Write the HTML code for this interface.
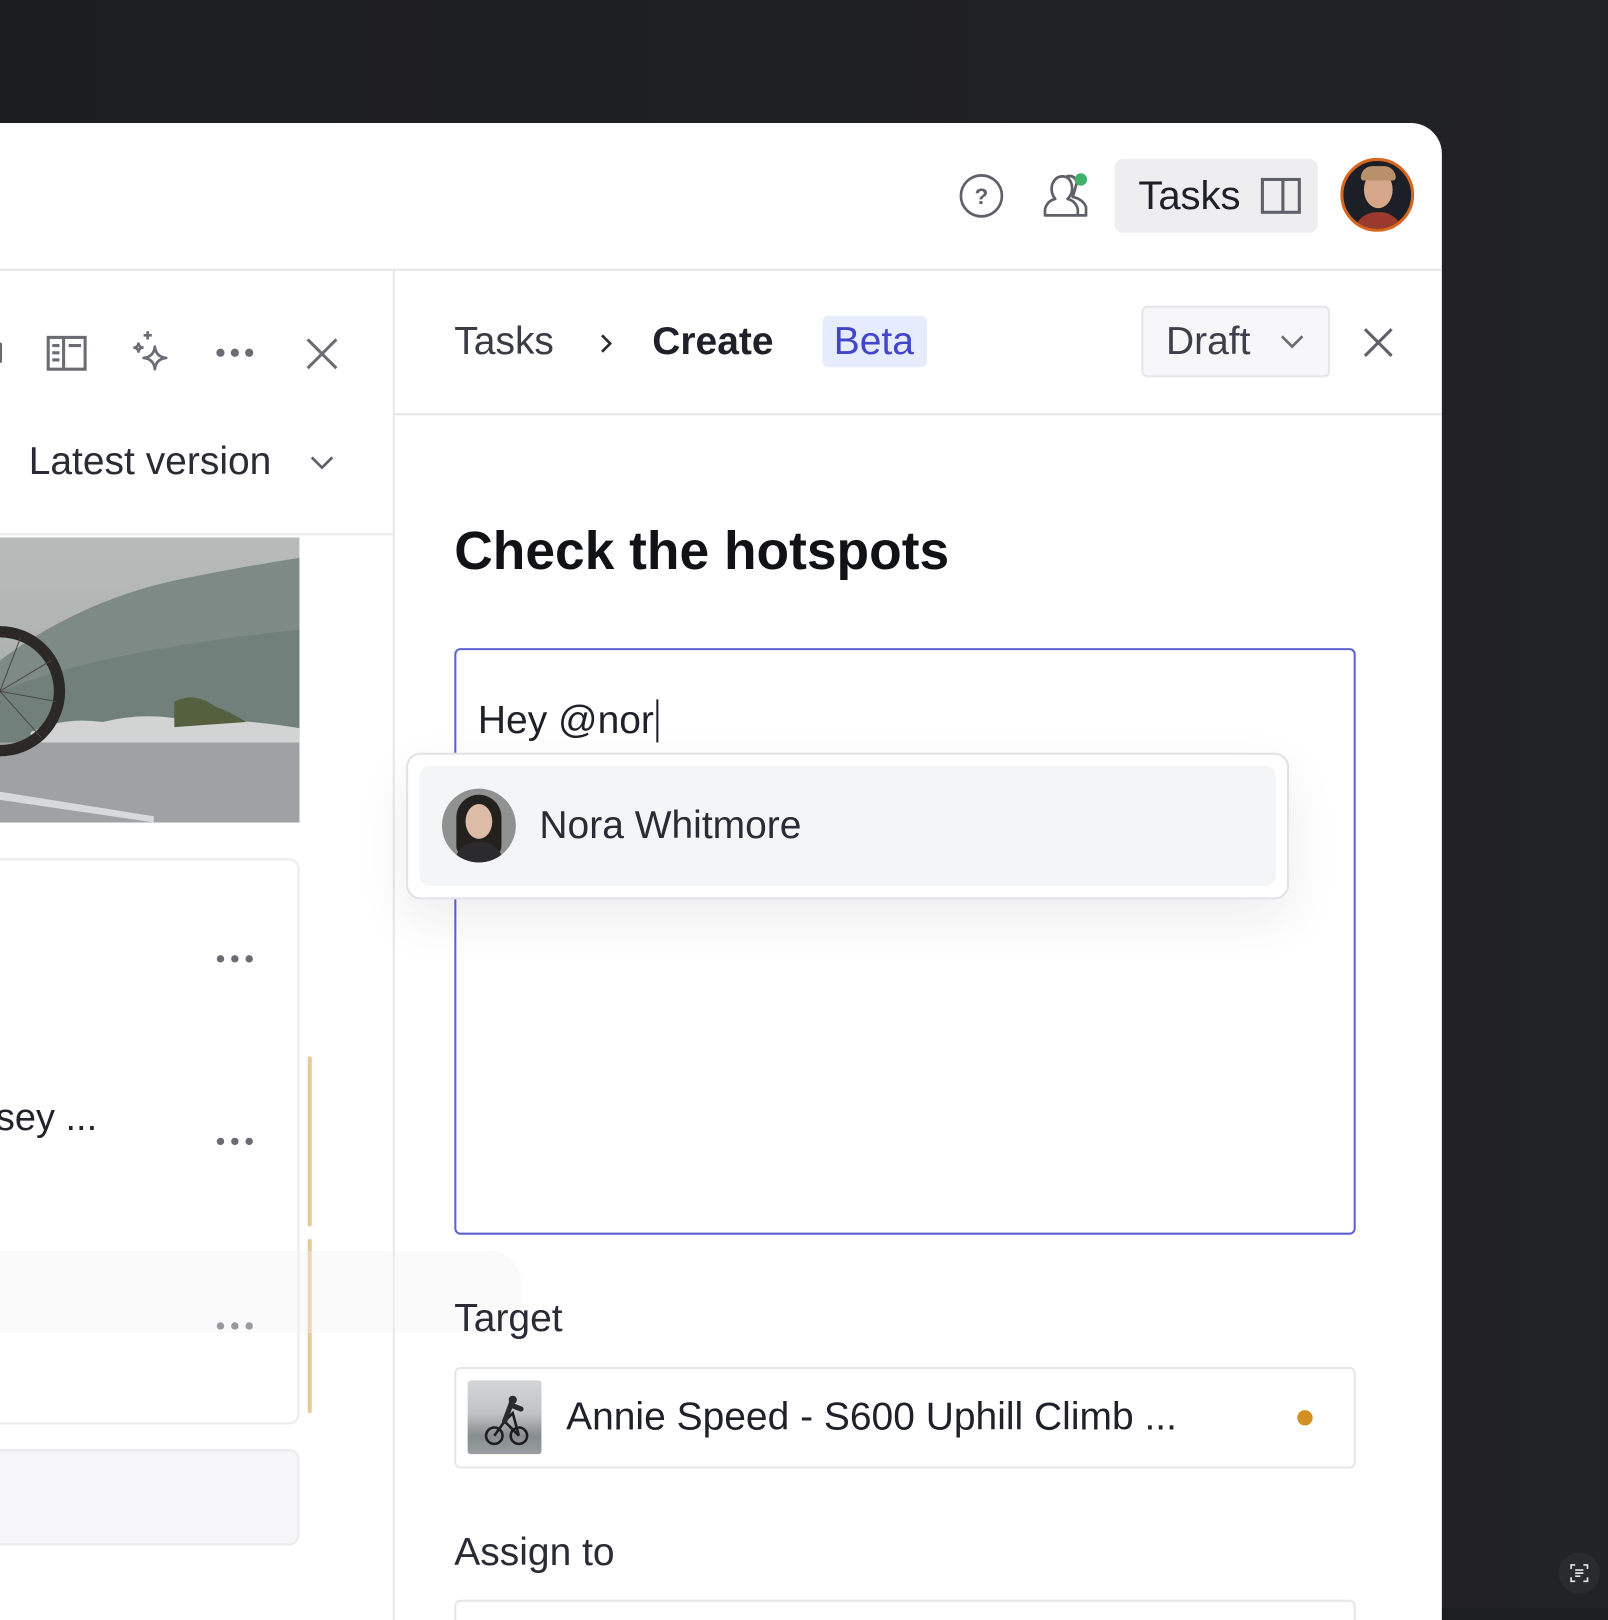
<!DOCTYPE html>
<html><head><meta charset="utf-8">
<style>
*{box-sizing:border-box;margin:0;padding:0}
html,body{width:1608px;height:1608px;overflow:hidden;background:#1d1e22}
body{font-family:"Liberation Sans",sans-serif}
#s{position:absolute;left:0;top:0;width:1568px;height:1568px;transform:scale(1.02551);transform-origin:0 0;background:linear-gradient(90deg,#1c1d21 0%,#222327 100%)}
.win{position:absolute;left:0;top:120px;width:1406px;height:1460px;background:#fff;border-top-right-radius:30px;overflow:hidden}
.abs{position:absolute}
.t{position:absolute;white-space:nowrap;line-height:1}
.ic{position:absolute}
</style></head><body><div id="s">
<div class="win">
  <div class="abs" style="left:0;top:142px;width:1406px;height:2px;background:#e6e6e9"></div>
  <svg class="ic" style="left:934px;top:48px" width="46" height="46" viewBox="0 0 46 46"><circle cx="23" cy="23" r="20" fill="none" stroke="#5f6069" stroke-width="2.6"/><text x="23" y="31" text-anchor="middle" font-family="Liberation Sans" font-weight="bold" font-size="22" fill="#5f6069">?</text></svg>
  <svg class="ic" style="left:1014px;top:46px" width="52" height="50" viewBox="0 0 52 50"><path d="M5 44 L5 38 Q7 30 15 28 Q10 22 12 14 Q15 6 22 6 Q29 6 31 14 Q33 22 27 28 Q35 30 37 38 L37 44 Z" fill="none" stroke="#5f6069" stroke-width="2.6" stroke-linejoin="round"/><path d="M26 6 Q34 4 36 12 Q34 20 32 26 Q42 28 45 36 L45 44 L37 44" fill="none" stroke="#5f6069" stroke-width="2.6" stroke-linejoin="round"/><circle cx="40" cy="9" r="6" fill="#3fb16a"/></svg>
  <div class="abs" style="left:1087px;top:35px;width:198px;height:72px;background:#eeeef1;border-radius:8px"></div>
  <div class="t" style="left:1110px;top:52px;font-size:39px;color:#1f2029">Tasks</div>
  <svg class="ic" style="left:1229px;top:53px" width="40" height="36" viewBox="0 0 40 36"><rect x="2" y="2" width="36" height="32" fill="none" stroke="#5f6069" stroke-width="3"/><line x1="22" y1="2" x2="22" y2="34" stroke="#5f6069" stroke-width="3"/></svg>
  <div class="abs" style="left:1307px;top:34px;width:72px;height:72px;border-radius:50%;border:3px solid #d8661f;background:#1c2026;overflow:hidden">
    <div class="abs" style="left:20px;top:10px;width:28px;height:36px;border-radius:50%;background:#d6a68a"></div>
    <div class="abs" style="left:17px;top:5px;width:34px;height:14px;border-radius:16px 16px 4px 4px;background:#b9906a"></div>
    <div class="abs" style="left:10px;top:50px;width:48px;height:24px;border-radius:22px 22px 0 0;background:#9a3a2e"></div>
  </div>

  <div class="abs" style="left:383px;top:142px;width:2px;height:1320px;background:#e8e8eb"></div>
  <div class="abs" style="left:0;top:400px;width:384px;height:2px;background:#e8e8eb"></div>
  <div class="abs" style="left:-4px;top:214px;width:6px;height:20px;background:#6a6b73;border-radius:2px"></div>
  <svg class="ic" style="left:45px;top:207px" width="40" height="36" viewBox="0 0 40 36"><rect x="2" y="2" width="36" height="31" fill="none" stroke="#6a6b73" stroke-width="3"/><line x1="17" y1="2" x2="17" y2="33" stroke="#6a6b73" stroke-width="3"/><line x1="6" y1="10" x2="13" y2="10" stroke="#6a6b73" stroke-width="3"/><line x1="6" y1="17" x2="13" y2="17" stroke="#6a6b73" stroke-width="3"/><line x1="6" y1="24" x2="13" y2="24" stroke="#6a6b73" stroke-width="3"/><line x1="22" y1="10" x2="34" y2="10" stroke="#6a6b73" stroke-width="3"/></svg>
  <svg class="ic" style="left:124px;top:200px" width="48" height="48" viewBox="0 0 48 48"><path d="M27 18 Q28 28 38 29 Q28 30 27 40 Q26 30 16 29 Q26 28 27 18Z" fill="none" stroke="#6a6b73" stroke-width="2.6" stroke-linejoin="round"/><path d="M11 14 Q11 19 16 19 Q11 19 11 24 Q11 19 6 19 Q11 19 11 14Z" fill="none" stroke="#6a6b73" stroke-width="2.4"/><path d="M20 3 L20 11 M16 7 L24 7" stroke="#6a6b73" stroke-width="2.6"/></svg>
  <svg class="ic" style="left:208px;top:214px" width="42" height="20" viewBox="0 0 42 20"><circle cx="7" cy="10" r="4" fill="#6a6b73"/><circle cx="21" cy="10" r="4" fill="#6a6b73"/><circle cx="35" cy="10" r="4" fill="#6a6b73"/></svg>
  <svg class="ic" style="left:297px;top:208px" width="34" height="34" viewBox="0 0 34 34"><path d="M3 3L31 31M31 3L3 31" stroke="#6a6b73" stroke-width="3"/></svg>
  <div class="t" style="left:28px;top:311px;font-size:38px;color:#2a2b35">Latest version</div>
  <svg class="ic" style="left:301px;top:322px" width="26" height="18" viewBox="0 0 26 18"><path d="M3 4L13 14L23 4" fill="none" stroke="#5f6069" stroke-width="2.6"/></svg>
  <svg class="ic" style="left:0;top:404px" width="292" height="278" viewBox="0 0 292 278">
    <defs><linearGradient id="sk" x1="0" y1="0" x2="0" y2="1"><stop offset="0" stop-color="#b8bbba"/><stop offset="1" stop-color="#a1a7a5"/></linearGradient></defs>
    <rect width="292" height="278" fill="url(#sk)"/>
    <path d="M0 120 Q80 60 180 40 Q240 28 292 20 L292 200 L0 200Z" fill="#7d8a85"/>
    <path d="M0 150 Q100 110 292 90 L292 200 L0 200Z" fill="#6e7c76" opacity=".7"/>
    <path d="M30 190 Q60 175 100 180 Q140 170 180 178 Q230 176 292 186 L292 205 L30 205Z" fill="#d2d4d3"/>
    <path d="M170 160 Q190 150 210 165 Q225 170 240 180 L170 185Z" fill="#55603f"/>
    <rect x="0" y="200" width="292" height="78" fill="#9ea2a5"/>
    <path d="M0 248 L150 272 L150 278 L0 256Z" fill="#d7d9da"/>
    <circle cx="0" cy="150" r="58" fill="none" stroke="#2b2826" stroke-width="11"/>
    <g stroke="#4a4846" stroke-width="1"><path d="M0 150L50 120M0 150L55 160M0 150L40 195M0 150L20 98"/></g>
  </svg>
  <div class="abs" style="left:-10px;top:717px;width:302px;height:552px;border:2px solid #ebebee;border-radius:10px"></div>
  <div class="abs" style="left:-10px;top:1293px;width:302px;height:94px;border:2px solid #ebebee;border-radius:10px;background:#f6f6f8"></div>
  <svg class="ic" style="left:208px;top:805px" width="42" height="20" viewBox="0 0 42 20"><circle cx="7" cy="10" r="3.6" fill="#6a6b73"/><circle cx="21" cy="10" r="3.6" fill="#6a6b73"/><circle cx="35" cy="10" r="3.6" fill="#6a6b73"/></svg>
  <svg class="ic" style="left:208px;top:983px" width="42" height="20" viewBox="0 0 42 20"><circle cx="7" cy="10" r="3.6" fill="#6a6b73"/><circle cx="21" cy="10" r="3.6" fill="#6a6b73"/><circle cx="35" cy="10" r="3.6" fill="#6a6b73"/></svg>
  <svg class="ic" style="left:208px;top:1163px" width="42" height="20" viewBox="0 0 42 20"><circle cx="7" cy="10" r="3.6" fill="#6a6b73"/><circle cx="21" cy="10" r="3.6" fill="#6a6b73"/><circle cx="35" cy="10" r="3.6" fill="#6a6b73"/></svg>
  <div class="t" style="left:-4px;top:951px;font-size:37px;color:#22232b">sey ...</div>
  <div class="abs" style="left:300px;top:910px;width:4px;height:166px;background:#e8c998;border-radius:2px"></div>
  <div class="abs" style="left:300px;top:1088px;width:4px;height:170px;background:#e8c998;border-radius:2px"></div>
  <div class="abs" style="left:0;top:1100px;width:508px;height:80px;background:rgba(240,240,243,.35);border-radius:0 30px 30px 0"></div>

  <div class="abs" style="left:385px;top:283px;width:1021px;height:2px;background:#e6e6e9"></div>
  <div class="t" style="left:443px;top:194px;font-size:38px;color:#3a3b45">Tasks</div>
  <svg class="ic" style="left:583px;top:204px" width="16" height="22" viewBox="0 0 16 22"><path d="M4 3L12 11L4 19" fill="none" stroke="#2a2b35" stroke-width="2.6"/></svg>
  <div class="t" style="left:636px;top:194px;font-size:38px;font-weight:bold;color:#1f2029">Create</div>
  <div class="abs" style="left:802px;top:188px;width:102px;height:50px;background:#e6ebfd;border-radius:6px"></div>
  <div class="t" style="left:813px;top:194px;font-size:38px;color:#4045c9">Beta</div>
  <div class="abs" style="left:1113px;top:178px;width:184px;height:70px;border:2px solid #e6e6ea;border-radius:6px;background:#f7f7f9"></div>
  <div class="t" style="left:1137px;top:194px;font-size:38px;color:#3e3f4a">Draft</div>
  <svg class="ic" style="left:1247px;top:204px" width="26" height="18" viewBox="0 0 26 18"><path d="M3 4L13 14L23 4" fill="none" stroke="#6a6b73" stroke-width="2.6"/></svg>
  <svg class="ic" style="left:1328px;top:198px" width="32" height="32" viewBox="0 0 32 32"><path d="M3 3L29 29M29 3L3 29" stroke="#5f6069" stroke-width="3"/></svg>

  <div class="t" style="left:443px;top:392px;font-size:52px;font-weight:bold;color:#111216">Check the hotspots</div>

  <div class="abs" style="left:443px;top:512px;width:879px;height:572px;border:2.5px solid #5d62d2;border-radius:6px"></div>
  <div class="t" style="left:466px;top:564px;font-size:38px;color:#1f2029">Hey @nor</div>
  <div class="abs" style="left:640px;top:562px;width:2px;height:42px;background:#1f2029"></div>

  <div class="abs" style="left:396px;top:614px;width:861px;height:143px;background:#fff;border:2px solid #e2e2e6;border-radius:14px;box-shadow:0 20px 50px rgba(30,30,50,.08)"></div>
  <div class="abs" style="left:409px;top:627px;width:835px;height:117px;background:#f4f5f7;border-radius:10px"></div>
  <div class="abs" style="left:431px;top:649px;width:72px;height:72px;border-radius:50%;background:#8f9290;overflow:hidden">
    <div class="abs" style="left:14px;top:6px;width:44px;height:60px;border-radius:22px 22px 10px 10px;background:#24201d"></div>
    <div class="abs" style="left:23px;top:15px;width:26px;height:34px;border-radius:50%;background:#dcbca6"></div>
    <div class="abs" style="left:12px;top:52px;width:48px;height:22px;border-radius:22px 22px 0 0;background:#2b2b2d"></div>
  </div>
  <div class="t" style="left:526px;top:666px;font-size:38px;color:#2a2b35">Nora Whitmore</div>

  <div class="t" style="left:443px;top:1147px;font-size:38px;color:#2a2b35">Target</div>
  <div class="abs" style="left:443px;top:1213px;width:879px;height:99px;border:2px solid #e6e6ea;border-radius:6px"></div>
  <div class="abs" style="left:456px;top:1226px;width:72px;height:72px;border-radius:3px;background:linear-gradient(180deg,#d4d5d6 0%,#c0c3c5 45%,#878c90 75%,#9a9ea1 100%)"></div>
  <svg class="ic" style="left:470px;top:1236px" width="50" height="56" viewBox="0 0 50 56"><circle cx="12" cy="44" r="8" fill="none" stroke="#1d1d1f" stroke-width="2.5"/><circle cx="36" cy="44" r="8" fill="none" stroke="#1d1d1f" stroke-width="2.5"/><path d="M12 44L22 30L36 44M22 30L30 22L36 44" fill="none" stroke="#1d1d1f" stroke-width="2.5"/><path d="M22 30L28 14L38 18" fill="none" stroke="#2b2b2d" stroke-width="5" stroke-linecap="round"/><circle cx="30" cy="9" r="4" fill="#2b2b2d"/></svg>
  <div class="t" style="left:552px;top:1243px;font-size:38px;color:#1f2029">Annie Speed - S600 Uphill Climb ...</div>
  <div class="abs" style="left:1265px;top:1255px;width:15px;height:15px;border-radius:50%;background:#d29022"></div>

  <div class="t" style="left:443px;top:1375px;font-size:38px;color:#2a2b35">Assign to</div>
  <div class="abs" style="left:443px;top:1440px;width:879px;height:60px;border:2px solid #e6e6ea;border-radius:6px"></div>
</div>
<div class="abs" style="left:1520px;top:1514px;width:40px;height:40px;border-radius:50%;background:#2a2b2f"></div>
<svg class="ic" style="left:1530px;top:1524px" width="20" height="20" viewBox="0 0 20 20"><path d="M2 6V2H6M14 2H18V6M18 14V18H14M6 18H2V14" fill="none" stroke="#e5e5e7" stroke-width="1.6"/><path d="M6 7H14M6 10H14M6 13H11" stroke="#e5e5e7" stroke-width="1.6"/></svg>
</div></body></html>
